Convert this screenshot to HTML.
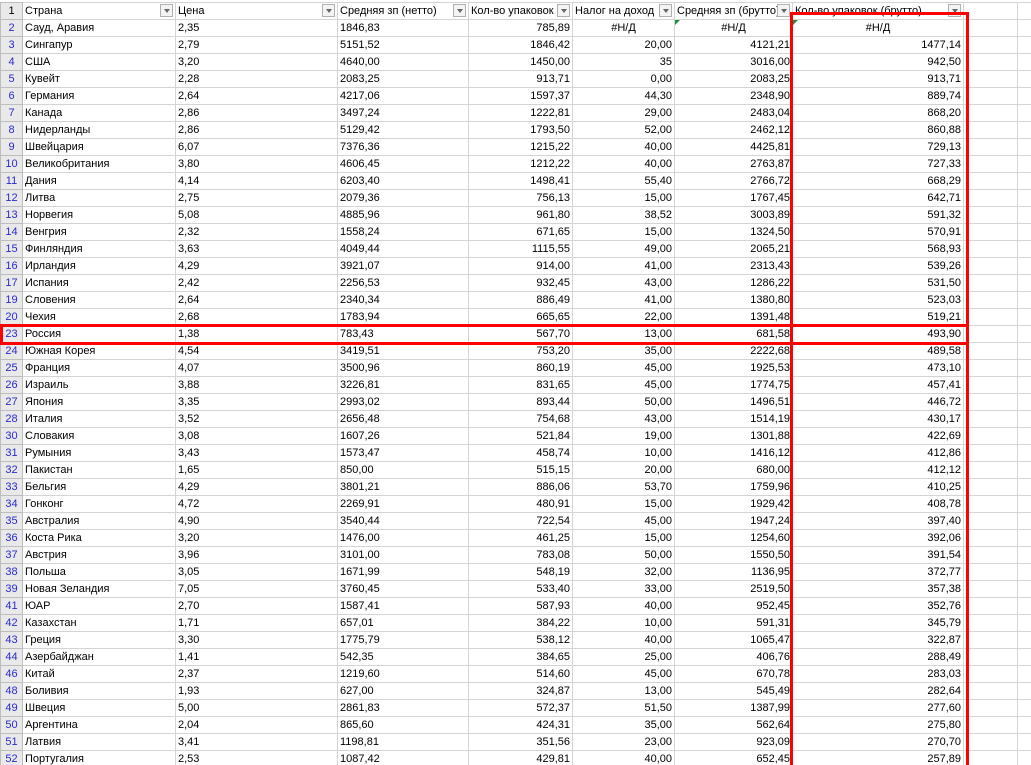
<!DOCTYPE html>
<html><head><meta charset="utf-8"><style>
html,body{margin:0;width:1031px;height:765px;overflow:hidden;background:#fff;font-family:"Liberation Sans",sans-serif;font-size:11px;color:#000}
body{position:relative}
table{position:absolute;left:0;top:2px;border-collapse:collapse;table-layout:fixed;width:1031px}
td{height:16px;padding:0 2px;border:1px solid #d4d4d4;white-space:nowrap;overflow:hidden;line-height:16px;position:relative}
td.h{background:#e9e9e9;color:#2a2acc;text-align:center;border-color:#bdbdbd;padding:0}
tr.t td.h{color:#000}
td.r{text-align:right}
td.c{text-align:center}
td.f{padding-right:20px}
.fb{position:absolute;right:2px;top:1px;width:13px;height:13px;border:1px solid #b0b0b0;background:#f4f4f4;box-sizing:border-box}
.fb:after{content:"";position:absolute;left:3px;top:4px;border-left:3px solid transparent;border-right:3px solid transparent;border-top:4px solid #666}
.gt{position:absolute;left:0;top:0;border-right:5px solid transparent;border-top:5px solid #1e8f3a}
.red{position:absolute;border:3px solid #f00;box-sizing:border-box}
</style></head><body>
<table>
<colgroup><col style="width:22px"><col style="width:153px"><col style="width:162px"><col style="width:131px"><col style="width:104px"><col style="width:102px"><col style="width:118px"><col style="width:171px"><col style="width:54px"><col style="width:14px"></colgroup>
<tr class="t"><td class="h">1</td><td class="f">Страна<span class="fb"></span></td><td class="f">Цена<span class="fb"></span></td><td class="f">Средняя зп (нетто)<span class="fb"></span></td><td class="f">Кол-во упаковок<span class="fb"></span></td><td class="f">Налог на доход<span class="fb"></span></td><td class="f">Средняя зп (брутто)<span class="fb"></span></td><td class="f">Кол-во упаковок (брутто)<span class="fb"></span></td><td></td><td></td></tr>
<tr><td class="h">2</td><td>Сауд, Аравия</td><td>2,35</td><td>1846,83</td><td class="r">785,89</td><td class="c">#Н/Д</td><td class="c"><span class="gt"></span>#Н/Д</td><td class="c"><span class="gt"></span>#Н/Д</td><td></td><td></td></tr>
<tr><td class="h">3</td><td>Сингапур</td><td>2,79</td><td>5151,52</td><td class="r">1846,42</td><td class="r">20,00</td><td class="r">4121,21</td><td class="r">1477,14</td><td></td><td></td></tr>
<tr><td class="h">4</td><td>США</td><td>3,20</td><td>4640,00</td><td class="r">1450,00</td><td class="r">35</td><td class="r">3016,00</td><td class="r">942,50</td><td></td><td></td></tr>
<tr><td class="h">5</td><td>Кувейт</td><td>2,28</td><td>2083,25</td><td class="r">913,71</td><td class="r">0,00</td><td class="r">2083,25</td><td class="r">913,71</td><td></td><td></td></tr>
<tr><td class="h">6</td><td>Германия</td><td>2,64</td><td>4217,06</td><td class="r">1597,37</td><td class="r">44,30</td><td class="r">2348,90</td><td class="r">889,74</td><td></td><td></td></tr>
<tr><td class="h">7</td><td>Канада</td><td>2,86</td><td>3497,24</td><td class="r">1222,81</td><td class="r">29,00</td><td class="r">2483,04</td><td class="r">868,20</td><td></td><td></td></tr>
<tr><td class="h">8</td><td>Нидерланды</td><td>2,86</td><td>5129,42</td><td class="r">1793,50</td><td class="r">52,00</td><td class="r">2462,12</td><td class="r">860,88</td><td></td><td></td></tr>
<tr><td class="h">9</td><td>Швейцария</td><td>6,07</td><td>7376,36</td><td class="r">1215,22</td><td class="r">40,00</td><td class="r">4425,81</td><td class="r">729,13</td><td></td><td></td></tr>
<tr><td class="h">10</td><td>Великобритания</td><td>3,80</td><td>4606,45</td><td class="r">1212,22</td><td class="r">40,00</td><td class="r">2763,87</td><td class="r">727,33</td><td></td><td></td></tr>
<tr><td class="h">11</td><td>Дания</td><td>4,14</td><td>6203,40</td><td class="r">1498,41</td><td class="r">55,40</td><td class="r">2766,72</td><td class="r">668,29</td><td></td><td></td></tr>
<tr><td class="h">12</td><td>Литва</td><td>2,75</td><td>2079,36</td><td class="r">756,13</td><td class="r">15,00</td><td class="r">1767,45</td><td class="r">642,71</td><td></td><td></td></tr>
<tr><td class="h">13</td><td>Норвегия</td><td>5,08</td><td>4885,96</td><td class="r">961,80</td><td class="r">38,52</td><td class="r">3003,89</td><td class="r">591,32</td><td></td><td></td></tr>
<tr><td class="h">14</td><td>Венгрия</td><td>2,32</td><td>1558,24</td><td class="r">671,65</td><td class="r">15,00</td><td class="r">1324,50</td><td class="r">570,91</td><td></td><td></td></tr>
<tr><td class="h">15</td><td>Финляндия</td><td>3,63</td><td>4049,44</td><td class="r">1115,55</td><td class="r">49,00</td><td class="r">2065,21</td><td class="r">568,93</td><td></td><td></td></tr>
<tr><td class="h">16</td><td>Ирландия</td><td>4,29</td><td>3921,07</td><td class="r">914,00</td><td class="r">41,00</td><td class="r">2313,43</td><td class="r">539,26</td><td></td><td></td></tr>
<tr><td class="h">17</td><td>Испания</td><td>2,42</td><td>2256,53</td><td class="r">932,45</td><td class="r">43,00</td><td class="r">1286,22</td><td class="r">531,50</td><td></td><td></td></tr>
<tr><td class="h">19</td><td>Словения</td><td>2,64</td><td>2340,34</td><td class="r">886,49</td><td class="r">41,00</td><td class="r">1380,80</td><td class="r">523,03</td><td></td><td></td></tr>
<tr><td class="h">20</td><td>Чехия</td><td>2,68</td><td>1783,94</td><td class="r">665,65</td><td class="r">22,00</td><td class="r">1391,48</td><td class="r">519,21</td><td></td><td></td></tr>
<tr><td class="h">23</td><td>Россия</td><td>1,38</td><td>783,43</td><td class="r">567,70</td><td class="r">13,00</td><td class="r">681,58</td><td class="r">493,90</td><td></td><td></td></tr>
<tr><td class="h">24</td><td>Южная Корея</td><td>4,54</td><td>3419,51</td><td class="r">753,20</td><td class="r">35,00</td><td class="r">2222,68</td><td class="r">489,58</td><td></td><td></td></tr>
<tr><td class="h">25</td><td>Франция</td><td>4,07</td><td>3500,96</td><td class="r">860,19</td><td class="r">45,00</td><td class="r">1925,53</td><td class="r">473,10</td><td></td><td></td></tr>
<tr><td class="h">26</td><td>Израиль</td><td>3,88</td><td>3226,81</td><td class="r">831,65</td><td class="r">45,00</td><td class="r">1774,75</td><td class="r">457,41</td><td></td><td></td></tr>
<tr><td class="h">27</td><td>Япония</td><td>3,35</td><td>2993,02</td><td class="r">893,44</td><td class="r">50,00</td><td class="r">1496,51</td><td class="r">446,72</td><td></td><td></td></tr>
<tr><td class="h">28</td><td>Италия</td><td>3,52</td><td>2656,48</td><td class="r">754,68</td><td class="r">43,00</td><td class="r">1514,19</td><td class="r">430,17</td><td></td><td></td></tr>
<tr><td class="h">30</td><td>Словакия</td><td>3,08</td><td>1607,26</td><td class="r">521,84</td><td class="r">19,00</td><td class="r">1301,88</td><td class="r">422,69</td><td></td><td></td></tr>
<tr><td class="h">31</td><td>Румыния</td><td>3,43</td><td>1573,47</td><td class="r">458,74</td><td class="r">10,00</td><td class="r">1416,12</td><td class="r">412,86</td><td></td><td></td></tr>
<tr><td class="h">32</td><td>Пакистан</td><td>1,65</td><td>850,00</td><td class="r">515,15</td><td class="r">20,00</td><td class="r">680,00</td><td class="r">412,12</td><td></td><td></td></tr>
<tr><td class="h">33</td><td>Бельгия</td><td>4,29</td><td>3801,21</td><td class="r">886,06</td><td class="r">53,70</td><td class="r">1759,96</td><td class="r">410,25</td><td></td><td></td></tr>
<tr><td class="h">34</td><td>Гонконг</td><td>4,72</td><td>2269,91</td><td class="r">480,91</td><td class="r">15,00</td><td class="r">1929,42</td><td class="r">408,78</td><td></td><td></td></tr>
<tr><td class="h">35</td><td>Австралия</td><td>4,90</td><td>3540,44</td><td class="r">722,54</td><td class="r">45,00</td><td class="r">1947,24</td><td class="r">397,40</td><td></td><td></td></tr>
<tr><td class="h">36</td><td>Коста Рика</td><td>3,20</td><td>1476,00</td><td class="r">461,25</td><td class="r">15,00</td><td class="r">1254,60</td><td class="r">392,06</td><td></td><td></td></tr>
<tr><td class="h">37</td><td>Австрия</td><td>3,96</td><td>3101,00</td><td class="r">783,08</td><td class="r">50,00</td><td class="r">1550,50</td><td class="r">391,54</td><td></td><td></td></tr>
<tr><td class="h">38</td><td>Польша</td><td>3,05</td><td>1671,99</td><td class="r">548,19</td><td class="r">32,00</td><td class="r">1136,95</td><td class="r">372,77</td><td></td><td></td></tr>
<tr><td class="h">39</td><td>Новая Зеландия</td><td>7,05</td><td>3760,45</td><td class="r">533,40</td><td class="r">33,00</td><td class="r">2519,50</td><td class="r">357,38</td><td></td><td></td></tr>
<tr><td class="h">41</td><td>ЮАР</td><td>2,70</td><td>1587,41</td><td class="r">587,93</td><td class="r">40,00</td><td class="r">952,45</td><td class="r">352,76</td><td></td><td></td></tr>
<tr><td class="h">42</td><td>Казахстан</td><td>1,71</td><td>657,01</td><td class="r">384,22</td><td class="r">10,00</td><td class="r">591,31</td><td class="r">345,79</td><td></td><td></td></tr>
<tr><td class="h">43</td><td>Греция</td><td>3,30</td><td>1775,79</td><td class="r">538,12</td><td class="r">40,00</td><td class="r">1065,47</td><td class="r">322,87</td><td></td><td></td></tr>
<tr><td class="h">44</td><td>Азербайджан</td><td>1,41</td><td>542,35</td><td class="r">384,65</td><td class="r">25,00</td><td class="r">406,76</td><td class="r">288,49</td><td></td><td></td></tr>
<tr><td class="h">46</td><td>Китай</td><td>2,37</td><td>1219,60</td><td class="r">514,60</td><td class="r">45,00</td><td class="r">670,78</td><td class="r">283,03</td><td></td><td></td></tr>
<tr><td class="h">48</td><td>Боливия</td><td>1,93</td><td>627,00</td><td class="r">324,87</td><td class="r">13,00</td><td class="r">545,49</td><td class="r">282,64</td><td></td><td></td></tr>
<tr><td class="h">49</td><td>Швеция</td><td>5,00</td><td>2861,83</td><td class="r">572,37</td><td class="r">51,50</td><td class="r">1387,99</td><td class="r">277,60</td><td></td><td></td></tr>
<tr><td class="h">50</td><td>Аргентина</td><td>2,04</td><td>865,60</td><td class="r">424,31</td><td class="r">35,00</td><td class="r">562,64</td><td class="r">275,80</td><td></td><td></td></tr>
<tr><td class="h">51</td><td>Латвия</td><td>3,41</td><td>1198,81</td><td class="r">351,56</td><td class="r">23,00</td><td class="r">923,09</td><td class="r">270,70</td><td></td><td></td></tr>
<tr><td class="h">52</td><td>Португалия</td><td>2,53</td><td>1087,42</td><td class="r">429,81</td><td class="r">40,00</td><td class="r">652,45</td><td class="r">257,89</td><td></td><td></td></tr>
</table>
<div class="red" style="left:0;top:324px;width:969px;height:21px"></div>
<div class="red" style="left:790px;top:12px;width:179px;height:760px"></div>
</body></html>
